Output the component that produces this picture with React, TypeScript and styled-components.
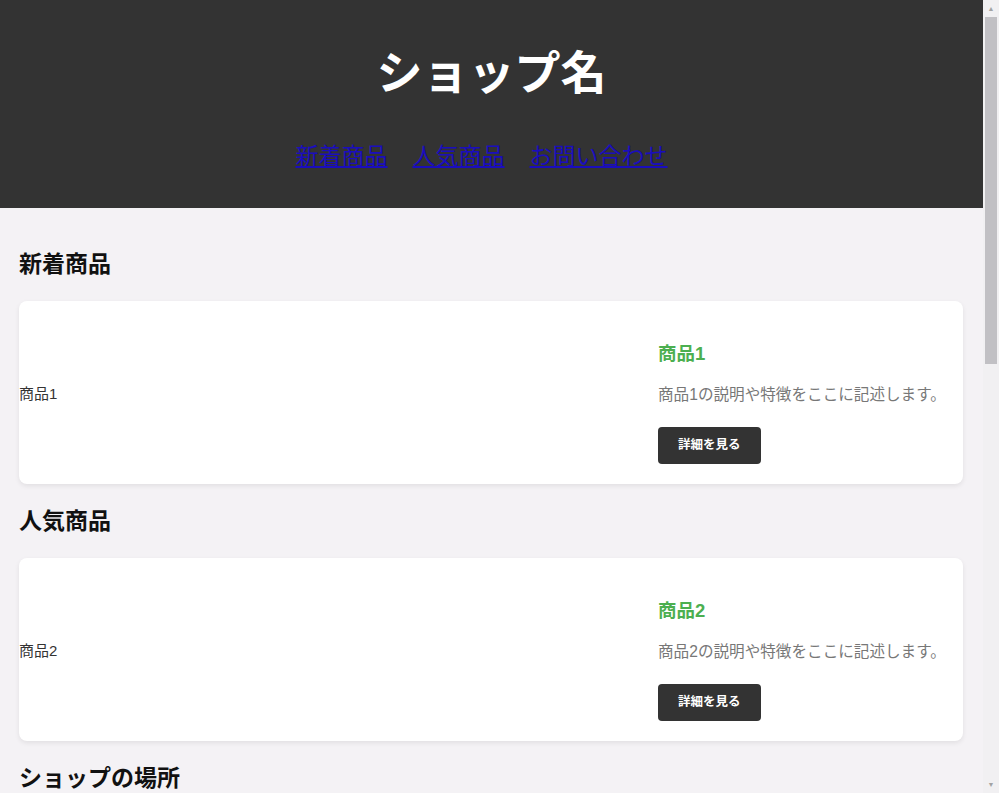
import React from "react";
import styled, { createGlobalStyle } from "styled-components";

const GlobalStyle = createGlobalStyle`
  html, body {
    margin: 0;
    padding: 0;
    height: 100%;
    overflow: hidden;
  }
  body {
    background: #f4f2f5;
    color: #222;
    font-family: "Liberation Sans", "Noto Sans CJK JP", sans-serif;
  }
`;

const Frame = styled.div`
  display: grid;
  grid-template-columns: 1fr 16px;
  height: 100vh;
`;

const Page = styled.div`
  overflow-y: auto;
  scrollbar-width: none;
  background: #f4f2f5;
  &::-webkit-scrollbar {
    display: none;
  }
`;

const ScrollRail = styled.div`
  display: flex;
  flex-direction: column;
  background: #f1f0f2;
  padding: 0 2px 0 2px;
`;

const RailArrow = styled.div`
  height: 17px;
  display: flex;
  align-items: center;
  justify-content: center;
  font-size: 7px;
  line-height: 1;
  color: #a3a3a3;
`;

const RailThumb = styled.div<{ $size: number }>`
  height: ${(p) => p.$size}px;
  background: #c1c0c4;
`;

const RailSpacer = styled.div`
  flex: 1;
`;

const Header = styled.header`
  background: #333333;
  color: #ffffff;
  text-align: center;
  padding: 20px 0;
`;

const Title = styled.h1`
  margin: 18px 0 31px;
  font-size: 46px;
  line-height: 70px;
  font-weight: 700;
`;

const NavList = styled.ul`
  list-style: none;
  margin: 0 0 14px;
  padding: 0 20px 0 0;
  display: flex;
  justify-content: center;
  gap: 25px;
`;

const NavLink = styled.a`
  font-size: 23px;
  line-height: 35px;
  color: #1a0dbd;
  text-decoration: underline;
`;

const Main = styled.main`
  padding: 19px 20px 20px 19px;
`;

const Section = styled.section``;

const SectionTitle = styled.h2`
  margin: 20px 0;
  font-size: 23px;
  line-height: 34px;
  font-weight: 700;
  color: #111;
`;

const Card = styled.div`
  display: grid;
  grid-template-columns: 1fr 325px;
  background: #ffffff;
  border-radius: 8px;
  box-shadow: 0 2px 5px rgba(0, 0, 0, 0.08);
`;

const ImageArea = styled.div`
  display: flex;
  align-items: center;
  font-size: 15px;
  color: #333;
`;

const Info = styled.div`
  padding: 20px;
  display: flex;
  flex-direction: column;
  align-items: flex-start;
`;

const ProductName = styled.h3`
  margin: 20px 0 17px;
  font-size: 18.5px;
  line-height: 26px;
  font-weight: 700;
  color: #4caf50;
`;

const Description = styled.p`
  margin: 0 0 21px;
  font-size: 15.6px;
  line-height: 22px;
  color: #777;
  white-space: nowrap;
`;

const DetailButton = styled.button`
  background: #333333;
  color: #ffffff;
  border: none;
  border-radius: 4px;
  padding: 10px 20px;
  font-family: inherit;
  font-size: 12.5px;
  line-height: 17px;
  font-weight: 700;
  cursor: pointer;
`;

const MapBox = styled.div`
  height: 450px;
  background: #e2e2e2;
  border-radius: 8px;
`;

const ContactText = styled.p`
  margin: 0 0 16px;
  font-size: 15px;
  color: #555;
`;

const Footer = styled.footer`
  background: #333333;
  color: #ffffff;
  text-align: center;
  padding: 20px;
  font-size: 14px;
`;

const products = [
  { section: "新着商品", name: "商品1" },
  { section: "人気商品", name: "商品2" },
];

export default function App() {
  return (
    <Frame>
      <GlobalStyle />
      <Page>
        <Header>
          <Title>ショップ名</Title>
          <nav>
            <NavList>
              <li><NavLink href="#new">新着商品</NavLink></li>
              <li><NavLink href="#popular">人気商品</NavLink></li>
              <li><NavLink href="#contact">お問い合わせ</NavLink></li>
            </NavList>
          </nav>
        </Header>
        <Main>
          {products.map((p) => (
            <Section key={p.name}>
              <SectionTitle>{p.section}</SectionTitle>
              <Card>
                <ImageArea>{p.name}</ImageArea>
                <Info>
                  <ProductName>{p.name}</ProductName>
                  <Description>{p.name}の説明や特徴をここに記述します。</Description>
                  <DetailButton>詳細を見る</DetailButton>
                </Info>
              </Card>
            </Section>
          ))}
          <Section>
            <SectionTitle>ショップの場所</SectionTitle>
            <MapBox />
          </Section>
          <Section id="contact">
            <SectionTitle>お問い合わせ</SectionTitle>
            <ContactText>ご質問やご要望は、お気軽にお問い合わせください。</ContactText>
            <ContactText>メール: info@example.com</ContactText>
            <ContactText>電話: 03-1234-5678</ContactText>
            <ContactText>営業時間: 10:00〜19:00（定休日: 水曜日）</ContactText>
          </Section>
        </Main>
        <Footer>© 2024 ショップ名. All rights reserved.</Footer>
      </Page>
      <ScrollRail aria-hidden="true">
        <RailArrow>▲</RailArrow>
        <RailThumb $size={347} />
        <RailSpacer />
        <RailArrow>▼</RailArrow>
      </ScrollRail>
    </Frame>
  );
}
